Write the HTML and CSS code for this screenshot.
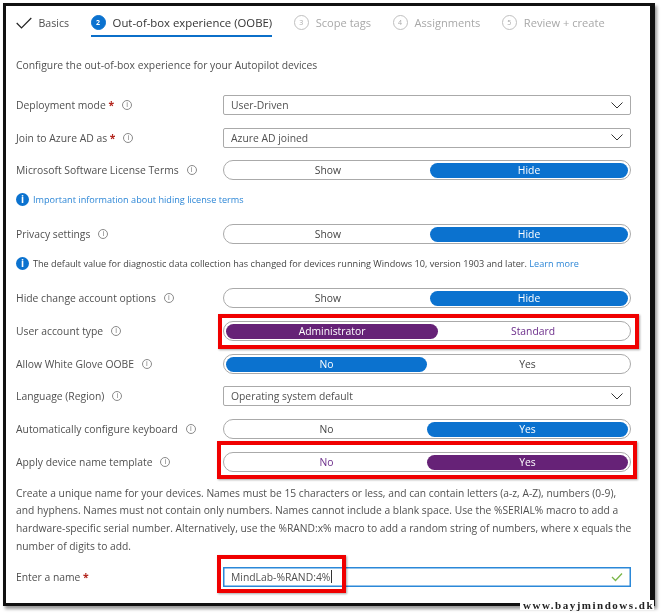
FILE: index.html
```html
<!DOCTYPE html>
<html lang="en">
<head>
    <meta charset="UTF-8">
    <meta name="viewport" content="width=device-width, initial-scale=1.0">
    <title>Out-of-box experience (OOBE)</title>
    <link rel="stylesheet" href="styles.css">
</head>
<body>
    <div class="frame">
        <div class="tabs">
            <div class="tab tab-done">
                <svg class="tick" width="16" height="12" viewBox="0 0 16 12"><path d="M.7 6 L5.5 10.8 L15.3 1" fill="none" stroke="#222" stroke-width="1.2"/></svg>
                <span>Basics</span>
            </div>
            <div class="tab tab-active"><span class="step step-on">2</span><span>Out-of-box experience (OOBE)</span></div>
            <div class="tab tab-off"><span class="step">3</span><span>Scope tags</span></div>
            <div class="tab tab-off"><span class="step">4</span><span>Assignments</span></div>
            <div class="tab tab-off"><span class="step">5</span><span>Review + create</span></div>
        </div>

        <p class="intro">Configure the out-of-box experience for your Autopilot devices</p>

        <div class="row">
            <div class="label">Deployment mode <span class="req">*</span><span class="info">i</span></div>
            <div class="select">User-Driven<svg class="chev" width="12" height="7" viewBox="0 0 12 7"><path d="M.5 .5 L6 6 L11.5 .5" fill="none" stroke="#333" stroke-width="1"/></svg></div>
        </div>
        <div class="row">
            <div class="label">Join to Azure AD as <span class="req">*</span><span class="info">i</span></div>
            <div class="select">Azure AD joined<svg class="chev" width="12" height="7" viewBox="0 0 12 7"><path d="M.5 .5 L6 6 L11.5 .5" fill="none" stroke="#333" stroke-width="1"/></svg></div>
        </div>
        <div class="row">
            <div class="label">Microsoft Software License Terms<span class="info">i</span></div>
            <div class="toggle toggle-hide"><span class="opt">Show</span><span class="opt on">Hide</span></div>
        </div>
        <div class="note"><span class="note-icon">i</span><a class="link">Important information about hiding license terms</a></div>
        <div class="row">
            <div class="label">Privacy settings<span class="info">i</span></div>
            <div class="toggle toggle-hide"><span class="opt">Show</span><span class="opt on">Hide</span></div>
        </div>
        <div class="note"><span class="note-icon">i</span><span>The default value for diagnostic data collection has changed for devices running Windows 10, version 1903 and later. <a class="link">Learn more</a></span></div>
        <div class="row">
            <div class="label">Hide change account options<span class="info">i</span></div>
            <div class="toggle toggle-hide"><span class="opt">Show</span><span class="opt on">Hide</span></div>
        </div>
        <div class="row">
            <div class="label">User account type<span class="info">i</span></div>
            <div class="toggle toggle-admin purple"><span class="opt on">Administrator</span><span class="opt">Standard</span></div>
        </div>
        <div class="row">
            <div class="label">Allow White Glove OOBE<span class="info">i</span></div>
            <div class="toggle"><span class="opt on">No</span><span class="opt">Yes</span></div>
        </div>
        <div class="row">
            <div class="label">Language (Region)<span class="info">i</span></div>
            <div class="select">Operating system default<svg class="chev" width="12" height="7" viewBox="0 0 12 7"><path d="M.5 .5 L6 6 L11.5 .5" fill="none" stroke="#333" stroke-width="1"/></svg></div>
        </div>
        <div class="row">
            <div class="label">Automatically configure keyboard<span class="info">i</span></div>
            <div class="toggle"><span class="opt">No</span><span class="opt on">Yes</span></div>
        </div>
        <div class="row row-last">
            <div class="label">Apply device name template<span class="info">i</span></div>
            <div class="toggle purple"><span class="opt">No</span><span class="opt on">Yes</span></div>
        </div>

        <p class="help">Create a unique name for your devices. Names must be 15 characters or less, and can contain letters (a-z, A-Z), numbers (0-9), and hyphens. Names must not contain only numbers. Names cannot include a blank space. Use the %SERIAL% macro to add a hardware-specific serial number. Alternatively, use the %RAND:x% macro to add a random string of numbers, where x equals the number of digits to add.</p>

        <div class="row">
            <div class="label">Enter a name <span class="req">*</span></div>
            <div class="input">MindLab-%RAND:4%<span class="caret"></span>
                <svg class="ok" width="12" height="10" viewBox="0 0 12 10"><path d="M1 5 L4.5 8.5 L11 1.5" fill="none" stroke="#7ab648" stroke-width="1.3"/></svg>
            </div>
        </div>

        <div class="mark mark-account"></div>
        <div class="mark mark-template"></div>
        <div class="mark mark-name"></div>
    </div>
    <div class="watermark">www.bayjmindows.dk</div>
</body>
</html>
```

FILE: styles.css
```css
html, body {
    margin: 0;
    padding: 0;
    background: white;
}
body {
    width: 661px;
    height: 614px;
    overflow: hidden;
    position: relative;
    font-family: "Open Sans", "Noto Sans", sans-serif;
    font-size: 10.35px;
    color: #505050;
}
.frame {
    box-sizing: border-box;
    width: 652px;
    height: 603px;
    margin: 3px 0 0 3px;
    padding: 4px 19px 0 10px;
    border: 3px solid #111;
    border-right-width: 5px;
    background: white;
    box-shadow: 2px 3px 3px rgba(0, 0, 0, 0.4);
    position: relative;
    filter: blur(0.4px);
}
.tabs {
    display: flex;
    align-items: center;
    height: 25px;
    gap: 21.5px;
}
.tab {
    box-sizing: border-box;
    display: flex;
    align-items: center;
    gap: 7px;
    height: 25px;
}
.tab-done {
    font-size: 10.6px;
    gap: 6.5px;
}
.tab-active {
    color: #333;
    font-size: 11.35px;
    border-bottom: 2px solid #0b6fc9;
    height: 27px;
    margin-top: 2px;
}
.tab-off {
    color: #a8a8a8;
    font-size: 11.1px;
}
.step {
    box-sizing: border-box;
    width: 15px;
    height: 15px;
    border: 1px solid #c0c0c0;
    border-radius: 50%;
    font-size: 7px;
    display: flex;
    align-items: center;
    justify-content: center;
}
.step-on {
    background: #0b72cf;
    border-color: #0b72cf;
    color: white;
    font-weight: bold;
}
.intro {
    margin: 22.5px 0 22.5px;
    height: 15px;
    line-height: 15px;
}
.row {
    display: flex;
    align-items: center;
    justify-content: space-between;
    height: 20px;
    margin-bottom: 12.7px;
}
.row-last {
    margin-bottom: 13px;
}
.label {
    display: flex;
    align-items: center;
    white-space: pre;
}
.req {
    color: #b3261e;
    font-weight: bold;
}
.info {
    box-sizing: border-box;
    width: 10px;
    height: 10px;
    margin-left: 8px;
    border: 1px solid #8a8a8a;
    border-radius: 50%;
    font-size: 7px;
    line-height: 8px;
    text-align: center;
    color: #707070;
}
.select, .toggle, .input {
    box-sizing: border-box;
    width: 408px;
    height: 20px;
    flex: none;
    border: 1px solid #aaa;
    background: white;
}
.select {
    display: flex;
    align-items: center;
    justify-content: space-between;
    padding: 0 7px;
    border-radius: 2px;
}
.toggle {
    display: grid;
    grid-template-columns: 1fr 1fr;
    padding: 2px;
    border-radius: 10px;
    text-align: center;
    line-height: 15px;
    color: #444;
}
.toggle-hide {
    grid-template-columns: 1fr 198px;
}
.toggle-admin {
    grid-template-columns: 212px 1fr;
}
.opt {
    border-radius: 8px;
}
.opt.on {
    background: #0b72cf;
    color: white;
}
.purple .opt {
    color: #6b2c8a;
}
.purple .opt.on {
    background: #662277;
    color: white;
}
.note {
    display: flex;
    align-items: center;
    gap: 4px;
    height: 14px;
    margin: -0.2px 0 17.5px;
    font-size: 9.15px;
    color: #444;
}
.note-icon {
    width: 13px;
    height: 13px;
    border-radius: 50%;
    background: #0b72cf;
    color: white;
    font-size: 10px;
    font-weight: bold;
    line-height: 13px;
    text-align: center;
    flex: none;
}
.link {
    color: #2c86d6;
}
.help {
    margin: 0 -3px 11.5px 0;
    font-size: 10.27px;
    line-height: 17.6px;
}
.input {
    display: flex;
    align-items: center;
    padding: 0 7px;
    border: 1px solid #2b88d8;
    box-shadow: inset 0 0 0 0.5px #2b88d8;
}
.caret {
    width: 1px;
    height: 13px;
    margin-left: 1px;
    background: #333;
}
.ok {
    margin-left: auto;
}
.mark {
    position: absolute;
    box-sizing: border-box;
    border: 4px solid #f00000;
    box-shadow: 1px 1px 2px rgba(0, 0, 0, 0.35);
}
.mark-account {
    left: 212px;
    top: 308px;
    width: 421px;
    height: 35px;
}
.mark-template {
    left: 211px;
    top: 435px;
    width: 420px;
    height: 38px;
}
.mark-name {
    left: 211px;
    top: 549px;
    width: 129px;
    height: 38px;
}
.watermark {
    position: absolute;
    right: 7px;
    top: 600px;
    height: 10px;
    line-height: 10px;
    padding-left: 3px;
    background: white;
    color: #222;
    font-family: "Liberation Serif", serif;
    font-size: 11px;
    font-weight: bold;
    letter-spacing: 1.5px;
    filter: blur(0.4px);
}
```
